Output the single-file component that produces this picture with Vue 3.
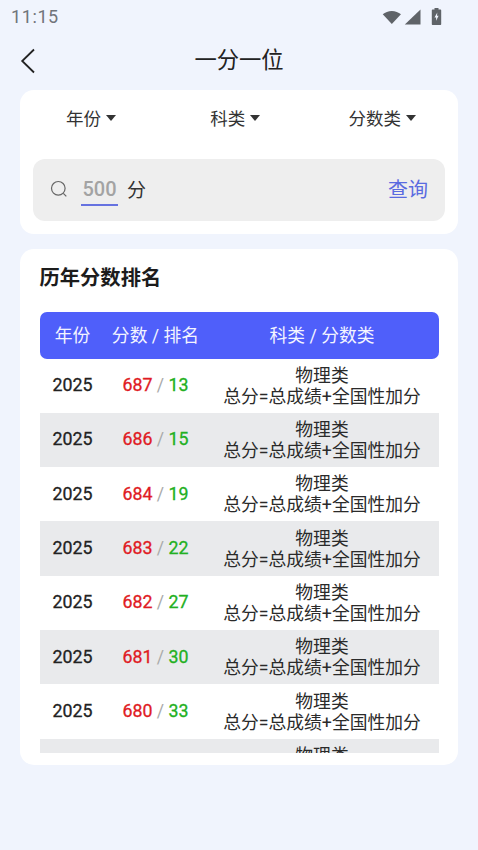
<script setup>
const filters = ['年份', '科类', '分数类']
const rows = [
  [687, 13], [686, 15], [684, 19], [683, 22], [682, 27], [681, 30], [680, 33], [679, 38]
]
</script>

<template>
  <div class="page">
    <div class="status">
      <span class="time">11:15</span>
      <div class="status-icons">
        <svg width="20" height="16" viewBox="0 0 21 16"><path d="M.8 5.200C3.300 3 6.600 1.600 10.300 1.600s7 1.400 9.600 3.600l-9.600 10.200z" fill="#5f6368"/></svg>
        <svg width="17" height="16" viewBox="0 0 17 16"><path d="M16.500.5v15H.8z" fill="#5f6368"/></svg>
        <svg class="battery" width="11" height="17" viewBox="0 0 11 17"><path fill-rule="evenodd" d="M3.500 0h4v1.600h1.700c.6 0 1 .4 1 1V16c0 .6-.4 1-1 1H1.800c-.6 0-1-.4-1-1V2.600c0-.6.4-1 1-1h1.700zM6.300 4.500 3.500 9.500h1.600v3.300l2.500-5H6z" fill="#5f6368"/></svg>
      </div>
    </div>

    <div class="nav">
      <svg class="back" width="16" height="26" viewBox="0 0 16 26"><path d="M14 1.500 2.200 13 14 24.500" fill="none" stroke="#222" stroke-width="1.800"/></svg>
      <span class="nav-title">一分一位</span>
    </div>

    <section class="card search-card">
      <div class="filters">
        <div v-for="f in filters" :key="f" class="filter">
          <span>{{ f }}</span><i class="caret"></i>
        </div>
      </div>
      <div class="search">
        <svg width="18" height="18" viewBox="0 0 18 18"><circle cx="8.300" cy="8.300" r="6.800" fill="none" stroke="#666" stroke-width="1.200"/><path d="m13.300 13.300 3 3" stroke="#666" stroke-width="1.200" fill="none"/></svg>
        <span class="score">500</span>
        <span class="unit">分</span>
        <span class="query">查询</span>
      </div>
    </section>

    <section class="card table-card">
      <h2 class="heading">历年分数排名</h2>
      <div class="table">
        <div class="row head">
          <div class="c1">年份</div>
          <div class="c2">分数 / 排名</div>
          <div class="c3">科类 / 分数类</div>
        </div>
        <div class="body">
          <div v-for="r in rows" :key="r[0]" class="row item">
            <div class="c1 year">2025</div>
            <div class="c2 nums"><span class="red">{{ r[0] }}</span><span class="sep"> / </span><span class="green">{{ r[1] }}</span></div>
            <div class="c3 desc">物理类<br>总分=总成绩+全国性加分</div>
          </div>
        </div>
      </div>
    </section>
  </div>
</template>

<style>
html, body { margin: 0; background: #f0f4fd; }
</style>

<style scoped>
.page {
  width: 478px;
  height: 850px;
  overflow: hidden;
  background: #f0f4fd;
  font-family: Roboto, "Noto Sans CJK SC", sans-serif;
  color: #222;
  box-sizing: border-box;
}
.status {
  height: 33px;
  padding: 0 36px 0 11px;
  display: flex;
  align-items: center;
  justify-content: space-between;
}
.time { font-size: 18px; color: #70757a; letter-spacing: .6px; }
.status-icons { display: flex; align-items: center; gap: 2px; }
.battery { margin-left: 8px; }
.nav {
  position: relative;
  height: 55px;
  display: flex;
  align-items: center;
  justify-content: center;
}
.back { position: absolute; left: 20px; top: 15px; }
.nav-title { font-size: 22.300px; line-height: 55px; }
.card {
  margin: 0 20px;
  background: #fff;
  border-radius: 14px;
}
.search-card {
  margin-top: 2px;
  height: 144px;
  padding: 0 13px;
  box-sizing: border-box;
}
.filters {
  height: 69px;
  padding: 0 29px 14px 33px;
  box-sizing: border-box;
  display: flex;
  justify-content: space-between;
  align-items: center;
}
.filter { display: flex; align-items: center; gap: 5px; font-size: 17.500px; color: #333; }
.filter:nth-child(2) { margin-left: 6px; }
.caret {
  width: 0;
  height: 0;
  margin-top: 1px;
  border-left: 5.500px solid transparent;
  border-right: 5.500px solid transparent;
  border-top: 6px solid #333;
}
.search {
  height: 62px;
  background: #eee;
  border-radius: 12px;
  display: flex;
  align-items: center;
  padding: 0 17px 3px;
  box-sizing: border-box;
}
.search svg { margin-right: 13px; }
.score {
  width: 37px;
  height: 32px;
  line-height: 30px;
  text-align: center;
  font-size: 20px;
  font-weight: 500;
  color: #a3a3a3;
  border-bottom: 2px solid #6672e0;
  box-sizing: border-box;
  margin-top: 2px;
}
.unit { font-size: 19px; margin-left: 9px; color: #333; }
.query { margin-left: auto; font-size: 20px; color: #5a6be0; }
.table-card {
  margin-top: 15px;
  height: 516px;
  padding: 0 19.500px;
  box-sizing: border-box;
}
.heading {
  margin: 0;
  height: 63px;
  line-height: 58px;
  font-size: 20.300px;
  font-weight: 700;
  color: #1c1c1c;
}
.table { height: 441px; overflow: hidden; }
.row { display: flex; align-items: center; text-align: center; }
.head {
  height: 46.500px;
  background: #4f5ffa;
  border-radius: 7px;
  color: #f3f4ff;
  font-size: 17.800px;
  padding-bottom: 3px;
  box-sizing: border-box;
}
.c1 { width: 66px; flex: none; }
.c2 { width: 100px; flex: none; white-space: nowrap; }
.c3 { flex: 1; }
.item { height: 54.330px; }
.item:nth-child(even) { background: #e9eaec; }
.year { font-size: 17.800px; font-weight: 400; color: #222; padding-bottom: 2px; -webkit-text-stroke: .3px #222; }
.nums { font-size: 17.800px; font-weight: 400; padding-bottom: 2px; -webkit-text-stroke: .3px; }
.red { color: #e01b24; }
.green { color: #22b022; }
.sep { color: #aaa; -webkit-text-stroke: 0; }
.desc { font-size: 17.800px; line-height: 21px; color: #2a2a2a; white-space: nowrap; }
</style>
